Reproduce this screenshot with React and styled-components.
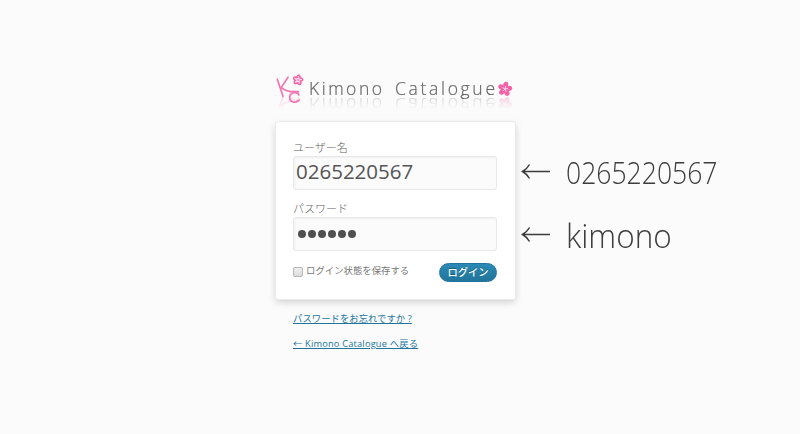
import React from "react";
import styled, { createGlobalStyle } from "styled-components";

const GlobalStyle = createGlobalStyle`
  * { box-sizing: border-box; }
  body {
    margin: 0;
    background: #fbfbfb;
    font-family: "Open Sans", "Noto Sans CJK JP", sans-serif;
    color: #777;
  }
`;

const Page = styled.main`
  display: flex;
  align-items: flex-start;
  height: 434px;
  padding: 70px 0 0 275px;
  overflow: hidden;
`;

const LoginColumn = styled.div`
  width: 241px;
  flex: none;
`;

const LogoArt = styled.svg`
  display: block;
  width: 241px;
  height: 34px;
  margin-bottom: 16.5px;
  -webkit-box-reflect: below -15px
    linear-gradient(transparent 40%, rgba(0, 0, 0, 0.28) 76%);
`;

const Card = styled.form`
  display: flex;
  flex-direction: column;
  height: 179px;
  padding: 19px 19px 0 18px;
  background: #fff;
  border: 1px solid #ebebeb;
  border-radius: 3px;
  box-shadow: 0 3px 7px -1px rgba(190, 190, 190, 0.75);
`;

const Field = styled.label`
  display: block;
  height: 61px;
`;

const Caption = styled.span`
  display: block;
  height: 15px;
  margin-left: -1px;
  color: #606060;
  font: 11px/12px "Noto Sans CJK JP", sans-serif;
  font-weight: 300;
  white-space: nowrap;
`;

const Input = styled.input`
  display: block;
  width: 204px;
  height: 34px;
  margin: 0 0 0 -1px;
  padding: 0 2px 3px;
  border: 1px solid #e8e8e8;
  border-radius: 3px;
  outline: none;
  background: #fbfbfb;
  box-shadow: inset 1px 1px 2px rgba(200, 200, 200, 0.2);
  color: #555;
  font: 20.5px/29px "Open Sans", sans-serif;
`;

const PasswordBox = styled.div`
  display: flex;
  align-items: center;
  gap: 2px;
  width: 204px;
  height: 34px;
  margin-left: -1px;
  padding: 0 0 0 4px;
  border: 1px solid #e8e8e8;
  border-radius: 3px;
  background: #fbfbfb;
  box-shadow: inset 1px 1px 2px rgba(200, 200, 200, 0.2);
`;

const Dot = styled.i`
  width: 8px;
  height: 8px;
  border-radius: 50%;
  background: #505050;
`;

const Actions = styled.div`
  display: flex;
  align-items: flex-start;
  width: 204px;
  margin-left: -1px;
`;

const Remember = styled.label`
  display: flex;
  flex: 1;
  font: 9.4px/14px "Noto Sans CJK JP", sans-serif;
  white-space: nowrap;
`;

const Check = styled.input`
  appearance: none;
  width: 10px;
  height: 10px;
  margin: 4px 3px 0 0;
  border: 1px solid #b5b5b5;
  border-radius: 2px;
  background: linear-gradient(#efefef, #dcdcdc);
`;

const Submit = styled.button`
  width: 58px;
  height: 19px;
  margin-top: 0;
  padding: 0;
  border: 1px solid #24759b;
  border-radius: 10px;
  background: linear-gradient(#2b8ab5, #21759b);
  color: #fff;
  font: 500 10.3px/16px "Noto Sans CJK JP", sans-serif;
  text-shadow: 0 -1px 0 rgba(0, 0, 0, 0.3);
  white-space: nowrap;
`;

const Links = styled.nav`
  display: flex;
  flex-direction: column;
  align-items: flex-start;
  gap: 11px;
  padding: 12px 0 0 18px;
`;

const TextLink = styled.a`
  height: 14px;
  color: #21759b;
  font: 9.3px/13px "Open Sans", "Noto Sans CJK JP", sans-serif;
  letter-spacing: ${(p) => p.$spacing || "0"};
  text-decoration: underline;
  text-underline-offset: 1px;
  white-space: nowrap;
`;

const Notes = styled.aside`
  display: flex;
  flex-direction: column;
  gap: 23px;
  padding: 82px 0 0 5px;
`;

const Note = styled.div`
  display: flex;
  align-items: center;
  height: 40px;
  gap: ${(p) => p.$gap};
`;

const NoteText = styled.span`
  margin-top: ${(p) => p.$drop || "0"};
  color: #3c3c3c;
  font: 300 ${(p) => p.$size}/40px "Open Sans", sans-serif;
  transform: scaleX(${(p) => p.$stretch});
  transform-origin: left center;
  white-space: nowrap;
`;

const ArrowArt = styled.svg`
  flex: none;
  width: 30px;
  height: 18px;
`;

function Arrow() {
  return (
    <ArrowArt viewBox="0 0 30 18" fill="none" stroke="#3c3c3c" strokeWidth="1.5">
      <path d="M1.5 8.5H29M8.5 1.5Q6 6 1.5 8.5Q6 11 8.5 15.5" />
    </ArrowArt>
  );
}

function Flower({ x, y, r, detail }) {
  return (
    <g transform={`translate(${x} ${y}) scale(${r})`}>
      {[0, 72, 144, 216, 288].map((a) => (
        <ellipse
          key={a}
          cx="0"
          cy="-4.3"
          rx="2.5"
          ry="3"
          transform={`rotate(${a + 10})`}
          fill={detail ? "#f462a7" : "#fbd5e6"}
          stroke="#f462a7"
          strokeWidth={detail ? 0 : 2.2}
        />
      ))}
      <circle r={detail ? 3.8 : 3} fill={detail ? "#f462a7" : "#fbfbfb"} />
      {detail && (
        <path
          d="M0 0L.6-3M0 0L3-.5M0 0L1.2 2.8M0 0L-2.2 2M0 0L-2.6-1.4"
          stroke="#ffd3e6"
          strokeWidth="1"
        />
      )}
      {!detail && <circle r="1.4" fill="#f462a7" />}
    </g>
  );
}

function Logo() {
  return (
    <LogoArt viewBox="0 0 241 34" role="img" aria-label="Kimono Catalogue">
      <g fill="none" stroke="#f277b2" strokeWidth="1.7" strokeLinecap="round">
        <path d="M2.3 9.2L8 26.3M13 7.2L6.3 17.6Q12 22.6 23.3 21.7" />
        <path d="M23.8 25C22.6 21.3 15.2 22 14.7 27.2C14.2 32.6 20.8 33.6 24.2 30.2" />
      </g>
      <Flower x={23} y={10} r={0.65} />
      <g
        fill="#666"
        stroke="#666"
        strokeWidth="0.2"
        fontFamily="Open Sans"
        fontSize="17.5"
        fontWeight="300"
      >
        <text x="34" y="25" textLength="73">Kimono</text>
        <text x="120" y="25" textLength="100">Catalogue</text>
      </g>
      <Flower x={230} y={19} r={1} detail />
    </LogoArt>
  );
}

export default function App() {
  return (
    <>
      <GlobalStyle />
      <Page>
        <LoginColumn>
          <Logo />
          <Card>
            <Field>
              <Caption>ユーザー名</Caption>
              <Input defaultValue="0265220567" />
            </Field>
            <Field>
              <Caption>パスワード</Caption>
              <PasswordBox>
                {[0, 1, 2, 3, 4, 5].map((n) => (
                  <Dot key={n} />
                ))}
              </PasswordBox>
            </Field>
            <Actions>
              <Remember>
                <Check type="checkbox" />
                ログイン状態を保存する
              </Remember>
              <Submit type="button">ログイン</Submit>
            </Actions>
          </Card>
          <Links>
            <TextLink href="#" $spacing="0.08px">パスワードをお忘れですか ?</TextLink>
            <TextLink href="#" $spacing="0.17px">← Kimono Catalogue へ戻る</TextLink>
          </Links>
        </LoginColumn>
        <Notes>
          <Note $gap="15px">
            <Arrow />
            <NoteText $size="30.5px" $stretch={0.87}>0265220567</NoteText>
          </Note>
          <Note $gap="15px">
            <Arrow />
            <NoteText $size="33px" $stretch={0.955} $drop="2px">kimono</NoteText>
          </Note>
        </Notes>
      </Page>
    </>
  );
}
